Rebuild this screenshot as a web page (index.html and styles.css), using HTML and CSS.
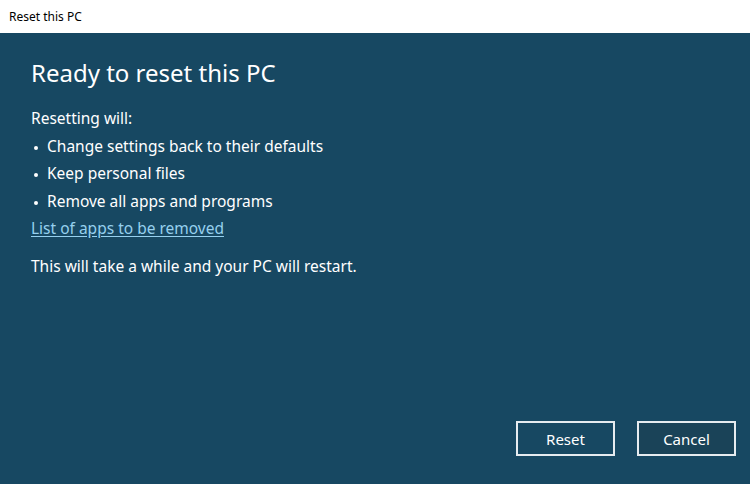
FILE: index.html
```html
<!DOCTYPE html>
<html>
<head>
<meta charset="utf-8">
<link rel="stylesheet" href="styles.css">
</head>
<body>
<div class="window">
  <div class="titlebar">Reset this PC</div>
  <div class="content">
    <div class="main">
      <h1 class="heading">Ready to reset this PC</h1>
      <p class="line">Resetting will:</p>
      <ul class="list">
        <li>Change settings back to their defaults</li>
        <li>Keep personal files</li>
        <li>Remove all apps and programs</li>
      </ul>
      <a class="link" href="#">List of apps to be removed</a>
      <p class="line note">This will take a while and your PC will restart.</p>
    </div>
    <div class="actions">
      <button class="btn">Reset</button>
      <button class="btn btn-cancel">Cancel</button>
    </div>
  </div>
</div>
</body>
</html>
```
FILE: styles.css
```css
html, body {
  margin: 0;
  padding: 0;
  width: 750px;
  height: 484px;
  overflow: hidden;
}
body {
  font-family: "Noto Sans", "Open Sans", sans-serif;
  background: #174862;
}
.window {
  display: flex;
  flex-direction: column;
  height: 484px;
}
.titlebar {
  height: 33px;
  background: #ffffff;
  color: #000;
  font-size: 12px;
  line-height: 33px;
  padding-left: 9px;
  flex: none;
}
.content {
  flex: 1;
  display: flex;
  flex-direction: column;
  justify-content: space-between;
  padding: 24px 14px 28px 31px;
  color: #ffffff;
}
.heading {
  margin: 0 0 16px 0;
  font-size: 24px;
  font-weight: 400;
  line-height: 32px;
}
.line {
  margin: 0;
  font-size: 15.5px;
  line-height: 27.5px;
}
.list {
  margin: 0;
  padding: 0;
  list-style: none;
  font-size: 15.5px;
  line-height: 27.5px;
}
.list li {
  position: relative;
  padding-left: 16px;
}
.list li::before {
  content: "";
  position: absolute;
  left: 3px;
  top: 13px;
  width: 4px;
  height: 4px;
  border-radius: 50%;
  background: #ffffff;
}
.link {
  display: inline-block;
  font-size: 15.5px;
  line-height: 27.5px;
  color: #96d0ee;
  text-decoration: underline;
  text-underline-offset: 2px;
}
.note {
  margin-top: 10px;
}
.actions {
  display: flex;
  justify-content: flex-end;
  gap: 22px;
}
.btn {
  width: 99px;
  height: 35px;
  border: 2px solid #e6ecf0;
  background: #174862;
  color: #ffffff;
  font-family: inherit;
  font-size: 15px;
  padding: 0;
}
.btn-cancel {
  background: #1a4358;
}
```
